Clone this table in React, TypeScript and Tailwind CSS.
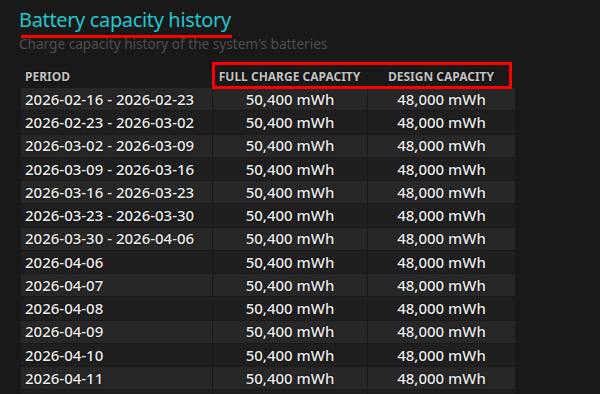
import React from 'react';

const periods = [
  '2026-02-16 - 2026-02-23',
  '2026-02-23 - 2026-03-02',
  '2026-03-02 - 2026-03-09',
  '2026-03-09 - 2026-03-16',
  '2026-03-16 - 2026-03-23',
  '2026-03-23 - 2026-03-30',
  '2026-03-30 - 2026-04-06',
  '2026-04-06',
  '2026-04-07',
  '2026-04-08',
  '2026-04-09',
  '2026-04-10',
  '2026-04-11',
  '',
];

const App: React.FC = () => {
  return (
    <div className="w-[600px] h-[394px] overflow-hidden bg-[#191919] font-['Noto_Sans',sans-serif]">
      <div className="pl-[19px] pt-[7px]">
        <h1 className="text-[20px] leading-[26px] tracking-[-0.35px] text-[#22c6d0] w-fit">Battery capacity history</h1>
        <div className="ml-[2px] mt-[2px] w-[211px] h-[3px] bg-[#ff0000]" />
        <p className="-mt-[3px] text-[13.6px] leading-[18px] text-[#4e4e4e]">
          Charge capacity history of the system's batteries
        </p>
      </div>

      <div className="ml-[21px] mt-[13px] w-[494px]">
        <div className="relative flex h-[22px] items-center text-[12px] font-bold text-[#c2c2c2] [text-shadow:0_0_2px_#000]">
          <div className="w-[191px] pl-[4px]">PERIOD</div>
          <div className="w-[155px] text-center">FULL CHARGE CAPACITY</div>
          <div className="w-[148px] text-center">DESIGN CAPACITY</div>
          <div className="absolute left-[191px] top-[-4px] w-[300px] h-[27px] border-[3px] border-[#ff0000]" />
        </div>

        <div className="flex flex-col gap-[1px]">
          {periods.map((p, i) => {
            const bg = i % 2 === 0 ? 'bg-[#272727]' : 'bg-[#1f1f1f]';
            return (
              <div
                key={i}
                className="flex h-[22.25px] items-center gap-[1px] text-[15px] font-medium text-[#ececec] [text-shadow:0_0_2px_#000]"
              >
                <div className={`w-[191px] h-full flex items-center pl-[4px] ${bg}`}>{p}</div>
                <div className={`w-[154px] h-full flex items-center justify-center ${bg}`}>{p && '50,400 mWh'}</div>
                <div className={`w-[147px] h-full flex items-center justify-center ${bg}`}>{p && '48,000 mWh'}</div>
              </div>
            );
          })}
        </div>
      </div>
    </div>
  );
};

export default App;
